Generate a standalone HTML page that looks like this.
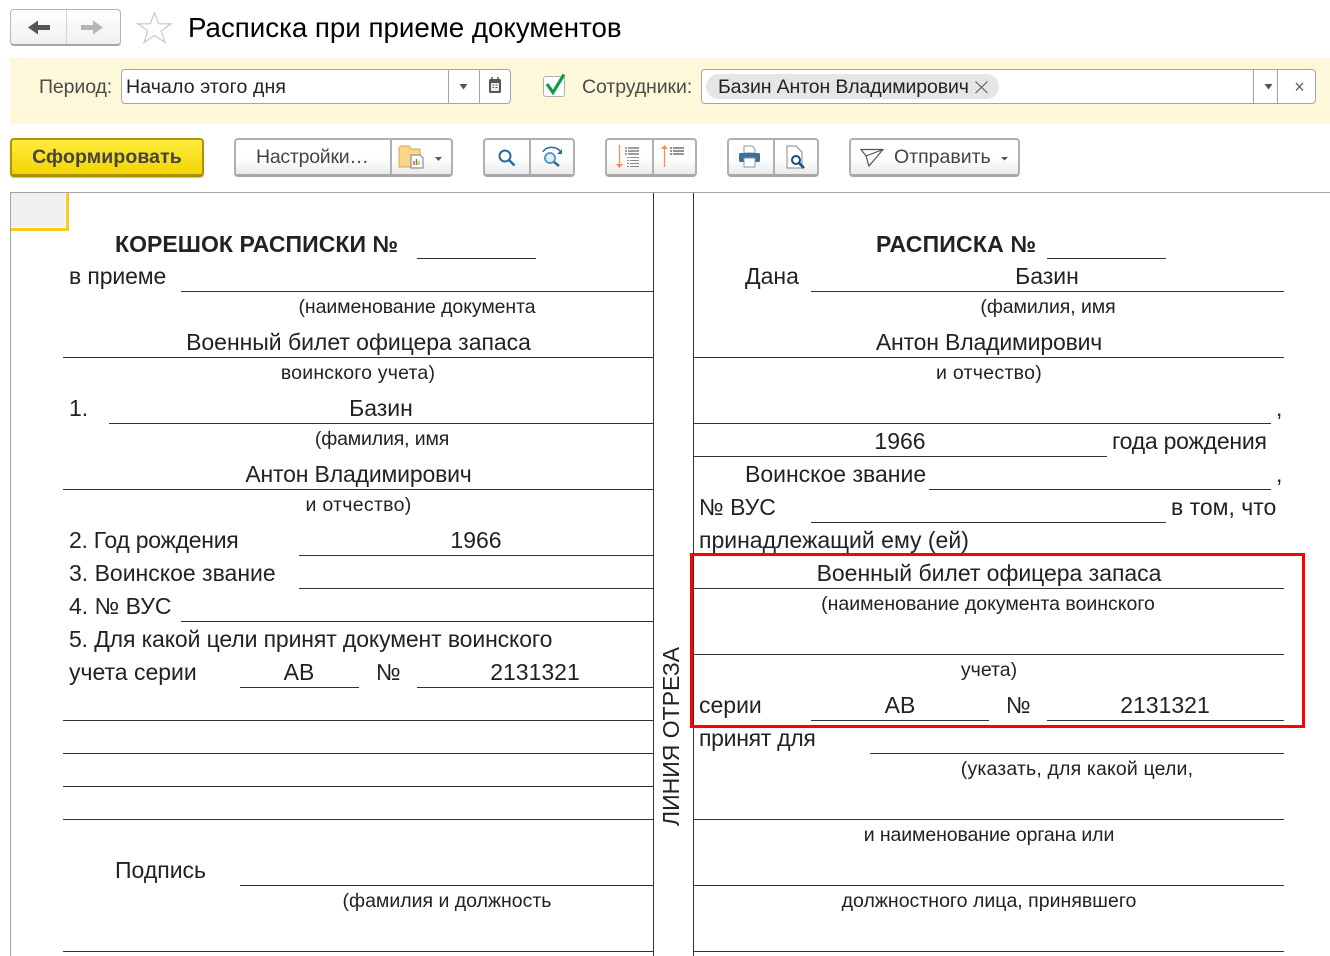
<!DOCTYPE html>
<html lang="ru"><head><meta charset="utf-8"><title>Расписка при приеме документов</title>
<style>
html,body{margin:0;padding:0;background:#fff}
body{position:relative;width:1330px;height:956px;overflow:hidden;font-family:"Liberation Sans",sans-serif;color:#222}
.a{position:absolute;box-sizing:border-box}
.t{position:absolute;white-space:nowrap;line-height:28px;font-size:23px;color:#222}
.s{font-size:19.5px;margin-top:1px}
.c{text-align:center}
.b{font-weight:bold}
.h{position:absolute;height:1px;background:#333}
.v{position:absolute;width:1px;background:#333}
.btn{position:absolute;top:138px;height:39px;box-sizing:border-box;border:2px solid #b0b0b0;border-bottom:3px solid #a8a8a8;border-radius:4px;background:linear-gradient(#fff,#fff 55%,#eaeaea);color:#444;font-size:19.5px;line-height:35px}
.sep{position:absolute;top:0;bottom:0;width:2px;background:#b0b0b0}
.field{position:absolute;top:69px;height:35px;box-sizing:border-box;border:1px solid #a5a5a5;border-radius:4px;background:#fff}
.fsep{position:absolute;top:0;bottom:0;width:1px;background:#a5a5a5}
svg{position:absolute;overflow:visible}
</style></head><body>

<!-- Nav -->
<div class="a" style="left:10px;top:9px;width:111px;height:37px;border:1px solid #b5b5b5;border-bottom:2px solid #a5a5a5;border-radius:4px;background:linear-gradient(#fff,#f0f0f0)"></div>
<div class="a" style="left:66px;top:10px;width:1px;height:34px;background:#d5d5d5"></div>
<svg style="left:0;top:0" width="180" height="50"><path d="M28 27.500L38 20.500V25H50V30H38V34.500Z" fill="#555"/><path d="M103 27.500L93 20.500V25H81V30H93V34.500Z" fill="#b5b5b5"/><path d="M154.500 12.500L158.800 23.800H171L161.200 30.800L165 42.500L154.500 35.500L144 42.500L147.800 30.800L138 23.800H150.200Z" fill="#fff" stroke="#c8c8c8" stroke-width="1.200"/></svg>
<div class="t" style="left:188px;top:11px;font-size:27.7px;line-height:34px;color:#000">Расписка при приеме документов</div>

<!-- Filter band -->
<div class="a" style="left:10px;top:58px;width:1320px;height:66px;background:#fef8da"></div>
<div class="t" style="left:39px;top:73px;font-size:19.5px;color:#4b4b4b;letter-spacing:-.1px">Период:</div>
<div class="field" style="left:121px;width:390px"><div class="fsep" style="left:326px"></div><div class="fsep" style="left:357px"></div></div>
<div class="t" style="left:126px;top:73px;font-size:19.500px;color:#222;letter-spacing:.12px">Начало этого дня</div>
<svg style="left:0;top:0" width="560" height="110"><path d="M459.500 84H467.500L463.500 89.500Z" fill="#555"/><rect x="489" y="79" width="12" height="14" rx="1.500" fill="#555"/><rect x="491" y="83" width="8" height="8" fill="#eee"/><path d="M492 77V81M498 77V81" stroke="#555" stroke-width="1.500"/><path d="M492.500 85H494M495.500 85H497.500M492.500 87.500H494M495.500 87.500H497.500" stroke="#555"/></svg>
<div class="a" style="left:543px;top:76px;width:22px;height:21px;border:1px solid #b0b0b0;border-radius:3px;background:#fff"></div>
<svg style="left:0;top:0" width="570" height="100"><path d="M547 84L553 92.500L564 74.500" fill="none" stroke="#0f9b4a" stroke-width="3.200"/></svg>
<div class="t" style="left:582px;top:73px;font-size:19.500px;color:#4b4b4b;letter-spacing:-.08px">Сотрудники:</div>
<div class="field" style="left:701px;width:615px"><div class="fsep" style="left:551px"></div><div class="fsep" style="left:575px"></div></div>
<div class="a" style="left:706px;top:74px;width:293px;height:25px;border-radius:13px;background:#e6e6e6"></div>
<div class="t" style="left:718px;top:73px;font-size:19.500px;color:#222;letter-spacing:-.13px">Базин Антон Владимирович</div>
<svg style="left:0;top:0" width="1330" height="110"><path d="M975.500 81.500L987.500 93M987.500 81.500L975.500 93" stroke="#555" stroke-width="1" fill="none"/><path d="M1264.500 84H1272.500L1268.500 89.500Z" fill="#555"/><path d="M1296 83L1303 90.500M1303 83L1296 90.500" stroke="#666" stroke-width="1.300" fill="none"/></svg>

<!-- Toolbar -->
<div class="btn b" style="left:10px;width:194px;border-color:#ad9400;border-bottom-color:#a99000;background:linear-gradient(#ffec3d,#f3d500);color:#444;text-align:center;box-shadow:0 1px 1px #bbb;letter-spacing:.1px">Сформировать</div>
<div class="btn" style="left:234px;width:219px"><div class="sep" style="left:154px"></div><span style="position:absolute;left:20px;top:0;letter-spacing:-.25px">Настройки…</span></div>
<div class="btn" style="left:483px;width:92px"><div class="sep" style="left:44px"></div></div>
<div class="btn" style="left:605px;width:92px"><div class="sep" style="left:45px"></div></div>
<div class="btn" style="left:727px;width:92px"><div class="sep" style="left:44px"></div></div>
<div class="btn" style="left:849px;width:171px"><span style="position:absolute;left:43px;top:0">Отправить</span></div>
<svg style="left:0;top:0" width="1330" height="190">
<!-- settings icon -->
<path d="M399 148V167H420V149H411L409 146H401Z" fill="#f8d888" stroke="#d9a850" stroke-width="1"/>
<path d="M411 155H420L423 158V168H411Z" fill="#fff" stroke="#778" stroke-width="1"/>
<path d="M414 161V165" stroke="#d44" stroke-width="1.500"/><path d="M416.500 159V165" stroke="#3a3" stroke-width="1.500"/><path d="M419 161V165" stroke="#da3" stroke-width="1.500"/>
<path d="M435 157H442L438.500 161Z" fill="#555"/>
<!-- search -->
<circle cx="505" cy="156" r="5.500" fill="none" stroke="#2a6a9e" stroke-width="2"/><path d="M509 160L514.500 165.500" stroke="#2a6a9e" stroke-width="2.500"/>
<path d="M543 152C546 146 556 146 560 151" fill="none" stroke="#2a6a9e" stroke-width="1.500"/><path d="M562 149V154H557Z" fill="#2a6a9e"/>
<circle cx="550" cy="158" r="5" fill="#e0eef8" stroke="#5a9ac8" stroke-width="2"/><path d="M554 162L559 166" stroke="#2a6a9e" stroke-width="2.500"/>
<!-- sort -->
<path d="M619.500 145V166" stroke="#f0905a" stroke-width="1.300"/><path d="M616 164H623L619.500 168Z" fill="#f0905a"/>
<path d="M625 148H639M625 151H639M625 154H639" stroke="#666" stroke-width="1.200" stroke-dasharray="2 1 11"/>
<path d="M627 157.500H639M627 160.500H639M627 163.500H639M627 166.500H639" stroke="#888" stroke-width="1.100" stroke-dasharray="2 1 11"/>
<path d="M664.500 167V148" stroke="#f0905a" stroke-width="1.300"/><path d="M661 149H668L664.500 145Z" fill="#f0905a"/>
<path d="M670 148H684M670 151H684M670 154H684" stroke="#555" stroke-width="1.300" stroke-dasharray="2 1 11"/>
<!-- print -->
<path d="M744 146H752L755 149V153H744Z" fill="#fff" stroke="#8a97a8"/>
<rect x="739" y="153" width="21" height="9" rx="1.500" fill="#3f6f9c"/>
<rect x="744" y="158" width="11" height="9" fill="#fff" stroke="#8a97a8"/>
<path d="M787 146H796L802 152V168H787Z" fill="#fff" stroke="#7d8a9c"/>
<circle cx="796" cy="160" r="4" fill="#fff" stroke="#0f4f80" stroke-width="2"/><path d="M799 163L804 168" stroke="#0f4f80" stroke-width="2.500"/>
<!-- send -->
<path d="M861 149.500H883L869 166L866 156L861 149.500ZM866 156L883 149.500" fill="none" stroke="#555" stroke-width="1.200"/>
<path d="M1001 157H1008L1004.500 160.500Z" fill="#555"/>
</svg>

<!-- Document frame -->
<div class="a" style="left:10px;top:192px;width:1320px;height:1px;background:#a5a5a5"></div>
<div class="a" style="left:10px;top:192px;width:1px;height:764px;background:#a5a5a5"></div>
<div class="a" style="left:11px;top:193px;width:54px;height:34px;background:#f0f0f0"></div>
<div class="a" style="left:11px;top:228px;width:58px;height:3px;background:#fdcb1f"></div>
<div class="a" style="left:66px;top:193px;width:3px;height:38px;background:#fdcb1f"></div>
<div class="v" style="left:653px;top:193px;height:763px"></div>
<div class="v" style="left:693px;top:193px;height:763px"></div>

<!-- Lines left -->
<div class="h" style="left:417px;top:258px;width:119px"></div>
<div class="h" style="left:181px;top:291px;width:472px"></div>
<div class="h" style="left:63px;top:357px;width:590px"></div>
<div class="h" style="left:109px;top:423px;width:544px"></div>
<div class="h" style="left:63px;top:489px;width:590px"></div>
<div class="h" style="left:299px;top:555px;width:354px"></div>
<div class="h" style="left:299px;top:588px;width:354px"></div>
<div class="h" style="left:181px;top:621px;width:472px"></div>
<div class="h" style="left:240px;top:687px;width:119px"></div>
<div class="h" style="left:417px;top:687px;width:236px"></div>
<div class="h" style="left:63px;top:720px;width:590px"></div>
<div class="h" style="left:63px;top:753px;width:590px"></div>
<div class="h" style="left:63px;top:786px;width:590px"></div>
<div class="h" style="left:63px;top:819px;width:590px"></div>
<div class="h" style="left:240px;top:885px;width:413px"></div>
<div class="h" style="left:63px;top:951px;width:590px"></div>

<!-- Lines right -->
<div class="h" style="left:1047px;top:258px;width:119px"></div>
<div class="h" style="left:811px;top:291px;width:473px"></div>
<div class="h" style="left:693px;top:357px;width:591px"></div>
<div class="h" style="left:693px;top:423px;width:578px"></div>
<div class="h" style="left:693px;top:456px;width:414px"></div>
<div class="h" style="left:929px;top:489px;width:342px"></div>
<div class="h" style="left:811px;top:522px;width:355px"></div>
<div class="h" style="left:693px;top:588px;width:591px"></div>
<div class="h" style="left:693px;top:654px;width:591px"></div>
<div class="h" style="left:811px;top:720px;width:178px"></div>
<div class="h" style="left:1047px;top:720px;width:237px"></div>
<div class="h" style="left:870px;top:753px;width:414px"></div>
<div class="h" style="left:693px;top:819px;width:591px"></div>
<div class="h" style="left:693px;top:885px;width:591px"></div>
<div class="h" style="left:693px;top:951px;width:591px"></div>

<!-- Left text -->
<div class="t b" style="left:115px;top:230px;letter-spacing:.05px">КОРЕШОК РАСПИСКИ №</div>
<div class="t" style="left:69px;top:262px;letter-spacing:-.12px">в приеме</div>
<div class="t s c" style="left:217px;width:400px;top:292px;letter-spacing:-.08px">(наименование документа</div>
<div class="t c" style="left:58px;width:601px;top:328px;letter-spacing:-.03px">Военный билет офицера запаса</div>
<div class="t s c" style="left:58px;width:600px;top:358px;letter-spacing:.2px">воинского учета)</div>
<div class="t" style="left:69px;top:394px">1.</div>
<div class="t c" style="left:281px;width:200px;top:394px">Базин</div>
<div class="t s c" style="left:282px;width:200px;top:424px;letter-spacing:-.15px">(фамилия, имя</div>
<div class="t c" style="left:58px;width:601px;top:460px;letter-spacing:-.17px">Антон Владимирович</div>
<div class="t s c" style="left:58px;width:601px;top:490px;letter-spacing:.3px">и отчество)</div>
<div class="t" style="left:69px;top:526px;letter-spacing:-.27px">2. Год рождения</div>
<div class="t c" style="left:376px;width:200px;top:526px">1966</div>
<div class="t" style="left:69px;top:559px">3. Воинское звание</div>
<div class="t" style="left:69px;top:592px">4. № ВУС</div>
<div class="t" style="left:69px;top:625px;letter-spacing:-.12px">5. Для какой цели принят документ воинского</div>
<div class="t" style="left:69px;top:658px">учета серии</div>
<div class="t c" style="left:199px;width:200px;top:658px">АВ</div>
<div class="t" style="left:376px;top:658px">№</div>
<div class="t c" style="left:435px;width:200px;top:658px">2131321</div>
<div class="t" style="left:115px;top:856px">Подпись</div>
<div class="t s c" style="left:247px;width:400px;top:886px">(фамилия и должность</div>

<!-- Cut line -->
<div class="t" style="left:657px;top:826px;transform-origin:0 0;transform:rotate(-90deg);font-size:23px;line-height:28px;width:182px">ЛИНИЯ ОТРЕЗА</div>

<!-- Right text -->
<div class="t b" style="left:876px;top:230px;letter-spacing:.2px">РАСПИСКА №</div>
<div class="t" style="left:745px;top:262px">Дана</div>
<div class="t c" style="left:947px;width:200px;top:262px">Базин</div>
<div class="t s c" style="left:848px;width:400px;top:292px;letter-spacing:-.08px">(фамилия, имя</div>
<div class="t c" style="left:689px;width:600px;top:328px;letter-spacing:-.17px">Антон Владимирович</div>
<div class="t s c" style="left:689px;width:600px;top:358px;letter-spacing:.3px">и отчество)</div>
<div class="t" style="left:1276px;top:394px">,</div>
<div class="t c" style="left:800px;width:200px;top:427px">1966</div>
<div class="t" style="left:1112px;top:427px;letter-spacing:-.23px">года рождения</div>
<div class="t" style="left:745px;top:460px">Воинское звание</div>
<div class="t" style="left:1276px;top:460px">,</div>
<div class="t" style="left:699px;top:493px">№ ВУС</div>
<div class="t" style="left:1171px;top:493px">в том, что</div>
<div class="t" style="left:699px;top:526px">принадлежащий ему (ей)</div>
<div class="t c" style="left:689px;width:600px;top:559px;letter-spacing:-.03px">Военный билет офицера запаса</div>
<div class="t s c" style="left:788px;width:400px;top:589px">(наименование документа воинского</div>
<div class="t s c" style="left:889px;width:200px;top:655px">учета)</div>
<div class="t" style="left:699px;top:691px">серии</div>
<div class="t c" style="left:800px;width:200px;top:691px">АВ</div>
<div class="t" style="left:1006px;top:691px">№</div>
<div class="t c" style="left:1065px;width:200px;top:691px">2131321</div>
<div class="t" style="left:699px;top:724px;letter-spacing:-.3px">принят для</div>
<div class="t s c" style="left:877px;width:400px;top:754px;letter-spacing:.16px">(указать, для какой цели,</div>
<div class="t s c" style="left:789px;width:400px;top:820px;letter-spacing:-.1px">и наименование органа или</div>
<div class="t s c" style="left:789px;width:400px;top:886px;letter-spacing:.02px">должностного лица, принявшего</div>

<!-- Red highlight -->
<div class="a" style="left:690px;top:553px;width:615px;height:175px;border:3px solid #f00"></div>
</body></html>
